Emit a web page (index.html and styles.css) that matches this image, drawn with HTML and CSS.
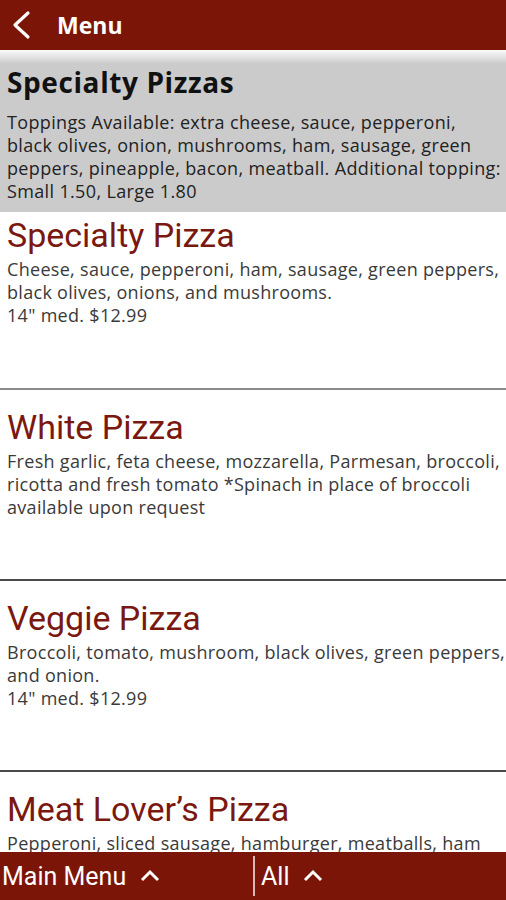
FILE: index.html
```html
<!DOCTYPE html>
<html lang="en">
<head>
  <meta charset="UTF-8" />
  <meta name="viewport" content="width=device-width, initial-scale=1.0" />
  <title>Menu</title>
  <link rel="stylesheet" href="styles.css">
</head>
<body>
  <div class="app">
    <header class="topbar">
      <svg class="back" width="22" height="30" viewBox="0 0 22 30">
        <path d="M18 3 L5 15 L18 27" fill="none" stroke="#fff" stroke-width="3.2" stroke-linecap="round" stroke-linejoin="round"/>
      </svg>
      <h1>Menu</h1>
    </header>

    <div class="content">
      <section class="category">
        <h2>Specialty Pizzas</h2>
        <p>Toppings Available: extra cheese, sauce, pepperoni, black olives, onion, mushrooms, ham, sausage, green peppers, pineapple, bacon, meatball. Additional topping: Small 1.50, Large 1.80</p>
      </section>

      <div class="item">
        <h3>Specialty Pizza</h3>
        <p>Cheese, sauce, pepperoni, ham, sausage, green peppers, black olives, onions, and mushrooms.<br>14" med. $12.99</p>
      </div>
      <div class="item">
        <h3>White Pizza</h3>
        <p>Fresh garlic, feta cheese, mozzarella, Parmesan, broccoli, ricotta and fresh tomato *Spinach in place of broccoli available upon request</p>
      </div>
      <div class="item">
        <h3>Veggie Pizza</h3>
        <p>Broccoli, tomato, mushroom, black olives, green peppers, and onion.<br>14" med. $12.99</p>
      </div>
      <div class="item">
        <h3>Meat Lover’s Pizza</h3>
        <p>Pepperoni, sliced sausage, hamburger, meatballs, ham</p>
      </div>
    </div>

    <footer class="bottombar">
      <div class="tab">
        <span>Main Menu</span>
        <svg width="22" height="14" viewBox="0 0 22 14"><path d="M3 11 L11 3 L19 11" fill="none" stroke="#fff" stroke-width="3"/></svg>
      </div>
      <div class="tab tab-right">
        <span>All</span>
        <svg width="22" height="14" viewBox="0 0 22 14"><path d="M3 11 L11 3 L19 11" fill="none" stroke="#fff" stroke-width="3"/></svg>
      </div>
    </footer>
  </div>
</body>
</html>
```

FILE: styles.css
```css
* { box-sizing: border-box; }
body {
  margin: 0;
  font-family: "Open Sans", "Liberation Sans", sans-serif;
  background: #fff;
}
.app {
  display: flex;
  flex-direction: column;
  height: 900px;
  overflow: hidden;
}
.topbar {
  height: 50px;
  flex-shrink: 0;
  background: #7b1508;
  display: flex;
  align-items: center;
  padding-left: 10px;
  gap: 25px;
}
.topbar h1 {
  margin: 0;
  color: #fff;
  font-size: 23px;
  font-weight: bold;
}
.content {
  flex: 1;
  overflow: hidden;
}
.category {
  background: linear-gradient(#fafafa 0, #cbcbcb 14px, #cbcbcb);
  padding: 13px 2px 8px 7px;
  height: 162px;
}
.category h2 {
  margin: 0 0 10px;
  font-size: 28px;
  line-height: 38px;
  letter-spacing: 0.6px;
  font-weight: bold;
  color: #111;
}
.category p {
  margin: 0;
  font-size: 18px;
  line-height: 23px;
  letter-spacing: 0.35px;
  color: #222;
}
.item {
  height: 191px;
  padding: 16px 0 0 7px;
  border-bottom: 2px solid #4a4a4a;
}
.item:first-of-type {
  border-bottom-color: #8a8a8a;
  height: 178px;
  padding-top: 2px;
}
.item h3 {
  margin: 0 0 2px;
  font-family: Roboto, "Liberation Sans", sans-serif;
  font-size: 34px;
  font-weight: normal;
  color: #7a1810;
  line-height: 42px;
}
.item p {
  margin: 0;
  font-size: 18px;
  line-height: 23px;
  letter-spacing: 0.3px;
  color: #3a3a3a;
}
.bottombar {
  height: 48px;
  flex-shrink: 0;
  background: #7b1508;
  display: flex;
  align-items: center;
  color: #fff;
  font-family: Roboto, "Liberation Sans", sans-serif;
  font-size: 25px;
}
.tab {
  width: 253px;
  display: flex;
  align-items: center;
  gap: 13px;
  padding-left: 2px;
}
.tab-right {
  border-left: 2px solid #d9b7b3;
  height: 40px;
  padding-left: 6px;
}
```
